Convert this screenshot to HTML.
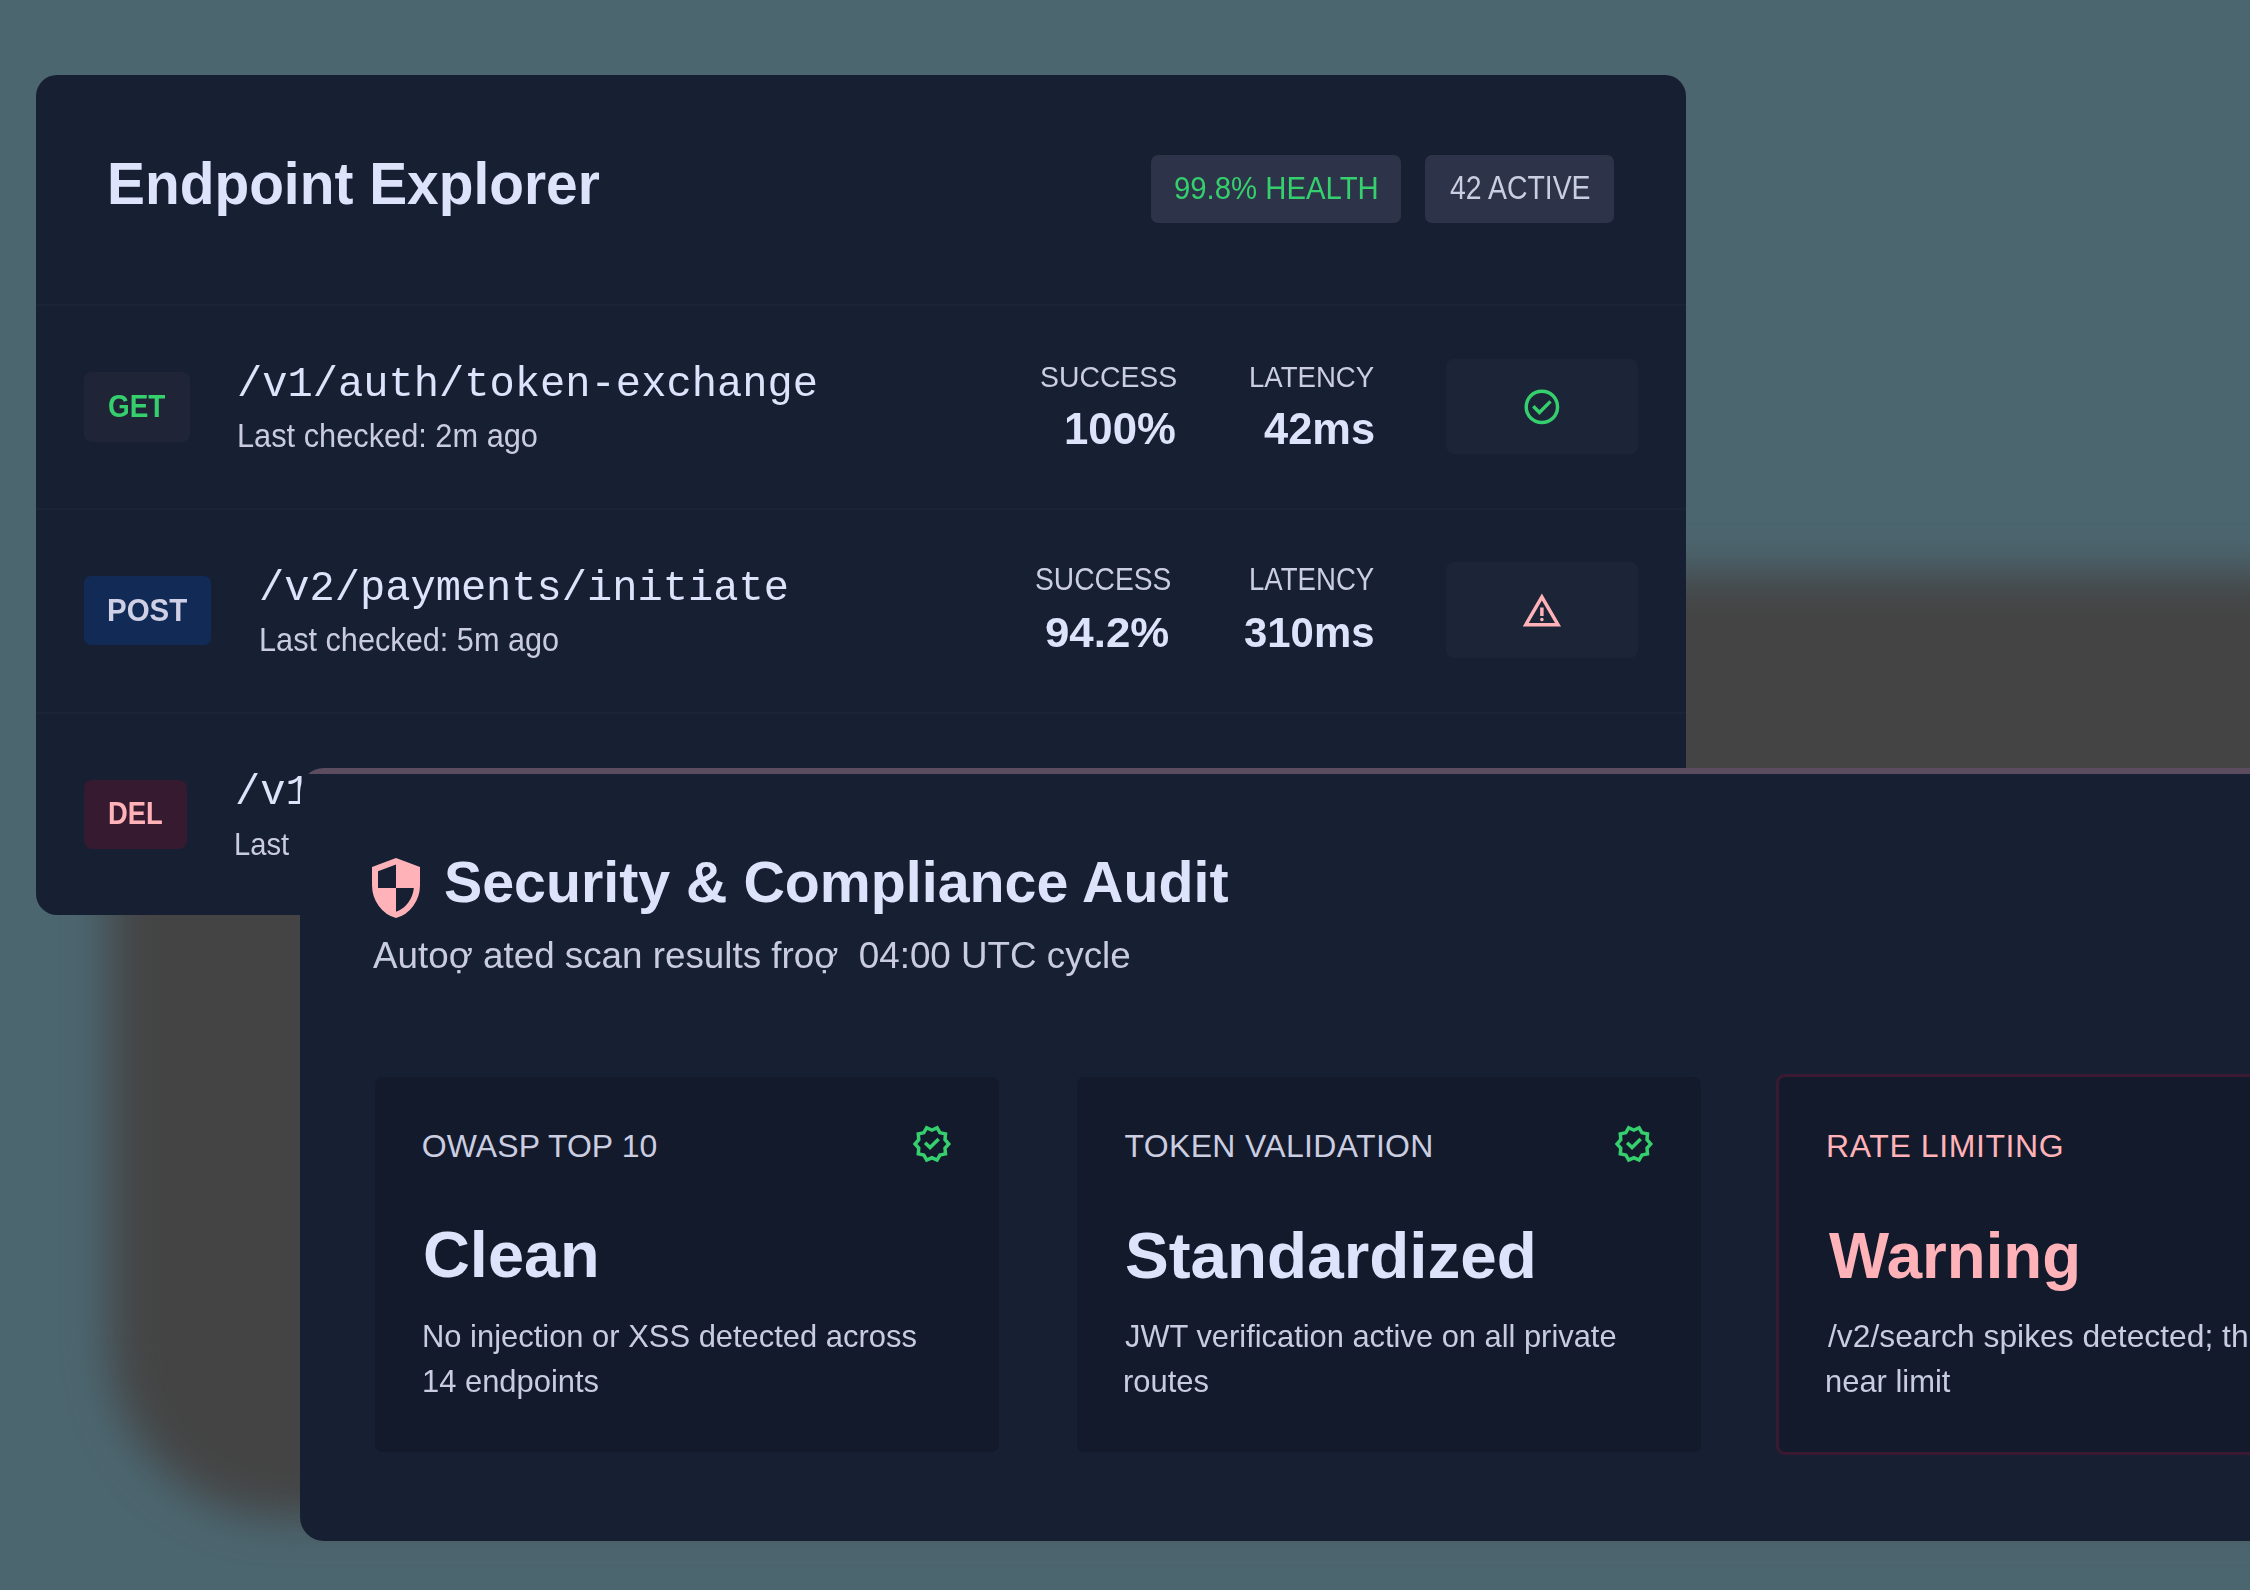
<!DOCTYPE html>
<html><head><meta charset="utf-8">
<style>
html,body{margin:0;padding:0;}
body{width:2250px;height:1590px;overflow:hidden;position:relative;background:#4c6670;}
.a{position:absolute;}
.t{position:absolute;white-space:pre;line-height:1;transform-origin:0 0;}
</style></head>
<body>

<div class="a" style="left:110px;top:573px;width:3000px;height:944px;border-radius:175px;background:#444444;filter:blur(22px);"></div>
<div class="a" style="left:36px;top:75px;width:1650px;height:840px;border-radius:21px;background:#171f33;"></div>
<div class="a" style="left:36px;top:304px;width:1650px;height:2px;background:#1b2337;"></div>
<div class="a" style="left:36px;top:508px;width:1650px;height:2px;background:#1b2337;"></div>
<div class="a" style="left:36px;top:712px;width:1650px;height:2px;background:#1b2337;"></div>
<div class="a" style="left:1151px;top:155px;width:250px;height:68px;border-radius:7px;background:#2d3348;"></div>
<div class="a" style="left:1425px;top:155px;width:189px;height:68px;border-radius:7px;background:#2d3348;"></div>
<div class="a" style="left:84px;top:372px;width:106px;height:70px;border-radius:8px;background:#1f2536;"></div>
<div class="a" style="left:84px;top:576px;width:127px;height:69px;border-radius:7px;background:#122b56;"></div>
<div class="a" style="left:84px;top:780px;width:103px;height:69px;border-radius:8px;background:#361a30;"></div>
<div class="a" style="left:1446px;top:359px;width:192px;height:95px;border-radius:8px;background:#1c2437;"></div>
<div class="a" style="left:1446px;top:562px;width:192px;height:96px;border-radius:8px;background:#1c2437;"></div>
<svg class="a" style="left:1520.90px;top:386.00px;" width="41.78" height="41.78" viewBox="0 -960 960 960"><path fill="#35cf6d" d="m424-296 282-282-56-56-226 226-114-114-56 56 170 170Zm56 216q-83 0-156-31.5T197-197q-54-54-85.5-127T80-480q0-83 31.5-156T197-763q54-54 127-85.5T480-880q83 0 156 31.5T763-763q54 54 85.5 127T880-480q0 83-31.5 156T763-197q-54 54-127 85.5T480-80Zm0-80q134 0 227-93t93-227q0-134-93-227t-227-93q-134 0-227 93t-93 227q0 134 93 227t227 93Zm0-320Z"/></svg>
<svg class="a" style="left:1521.20px;top:590.40px;" width="41.78" height="41.78" viewBox="0 -960 960 960"><path fill="#ffb3b8" d="m40-120 440-760 440 760H40Zm138-80h604L480-720 178-200Zm302-40q17 0 28.5-11.5T520-280q0-17-11.5-28.5T480-320q-17 0-28.5 11.5T440-280q0 17 11.5 28.5T480-240Zm-40-120h80v-200h-80v200Zm40-100Z"/></svg>
<div class="t" style="left:106.80px;top:154.70px;font:700 58.70px/1 'Liberation Sans',sans-serif;transform:scaleX(0.9689);color:#dde3fb;">Endpoint Explorer</div>
<div class="t" style="left:1174.48px;top:172.92px;font:400 31.16px/1 'Liberation Sans',sans-serif;transform:scaleX(0.9410);color:#35cf6d;">99.8% HEALTH</div>
<div class="t" style="left:1449.59px;top:172.31px;font:400 32.46px/1 'Liberation Sans',sans-serif;transform:scaleX(0.8755);color:#cbcde0;">42 ACTIVE</div>
<div class="t" style="left:107.78px;top:390.06px;font:700 32.17px/1 'Liberation Sans',sans-serif;transform:scaleX(0.8681);color:#35cf6d;">GET</div>
<div class="t" style="left:236.98px;top:363.56px;font:400 42.31px/1 'Liberation Mono',monospace;transform:scaleX(0.9951);color:#dde3fb;">/v1/auth/token-exchange</div>
<div class="t" style="left:236.84px;top:419.75px;font:400 32.90px/1 'Liberation Sans',sans-serif;transform:scaleX(0.9353);color:#c9cbe1;">Last checked: 2m ago</div>
<div class="t" style="left:1039.92px;top:360.94px;font:400 30.42px/1 'Liberation Sans',sans-serif;transform:scaleX(0.9331);color:#cbcde0;">SUCCESS</div>
<div class="t" style="left:1063.96px;top:406.95px;font:700 43.94px/1 'Liberation Sans',sans-serif;transform:scaleX(0.9950);color:#dde3fb;">100%</div>
<div class="t" style="left:1248.59px;top:360.94px;font:400 30.42px/1 'Liberation Sans',sans-serif;transform:scaleX(0.9072);color:#cbcde0;">LATENCY</div>
<div class="t" style="left:1263.75px;top:406.86px;font:700 44.57px/1 'Liberation Sans',sans-serif;transform:scaleX(0.9746);color:#dde3fb;">42ms</div>
<div class="t" style="left:107.38px;top:594.67px;font:700 31.55px/1 'Liberation Sans',sans-serif;transform:scaleX(0.9347);color:#cfd0e5;">POST</div>
<div class="t" style="left:259.39px;top:567.56px;font:400 42.31px/1 'Liberation Mono',monospace;transform:scaleX(0.9942);color:#dde3fb;">/v2/payments/initiate</div>
<div class="t" style="left:259.24px;top:623.75px;font:400 32.90px/1 'Liberation Sans',sans-serif;transform:scaleX(0.9328);color:#c9cbe1;">Last checked: 5m ago</div>
<div class="t" style="left:1034.83px;top:564.78px;font:400 30.85px/1 'Liberation Sans',sans-serif;transform:scaleX(0.9149);color:#cbcde0;">SUCCESS</div>
<div class="t" style="left:1045.27px;top:611.26px;font:700 43.24px/1 'Liberation Sans',sans-serif;transform:scaleX(1.0134);color:#dde3fb;">94.2%</div>
<div class="t" style="left:1248.59px;top:564.78px;font:400 30.85px/1 'Liberation Sans',sans-serif;transform:scaleX(0.8948);color:#cbcde0;">LATENCY</div>
<div class="t" style="left:1244.15px;top:611.26px;font:700 43.24px/1 'Liberation Sans',sans-serif;transform:scaleX(0.9691);color:#dde3fb;">310ms</div>
<div class="t" style="left:107.92px;top:798.23px;font:700 31.74px/1 'Liberation Sans',sans-serif;transform:scaleX(0.8633);color:#ffb3b8;">DEL</div>
<div class="t" style="left:234.78px;top:771.56px;font:400 42.31px/1 'Liberation Mono',monospace;transform:scaleX(0.9951);color:#dde3fb;">/v1/users/purge-cache</div>
<div class="t" style="left:234.27px;top:828.52px;font:400 31.16px/1 'Liberation Sans',sans-serif;transform:scaleX(0.9353);color:#c9cbe1;">Last</div>
<div class="a" style="left:300px;top:768px;width:2300px;height:773px;border-radius:24px;background:#171f33;overflow:hidden;"><div class="a" style="left:0;top:0;width:100%;height:6px;background:#5b4d5f;"></div></div>
<svg class="a" style="left:360.00px;top:852.00px;" width="72.00" height="72.00" viewBox="0 -960 960 960"><path fill="#ffb3b8" d="M480-80q-139-35-229.5-159.5T160-516v-244l320-120 320 120v244q0 152-90.5 276.5T480-80Zm0-84q97-30 162-118.5T718-480H480v-315l-240 90v207q0 7 2 18h238v316Z"/></svg>
<div class="a" style="left:375px;top:1077px;width:624px;height:375px;border-radius:7px;background:#131a2c;"></div>
<div class="a" style="left:1077px;top:1077px;width:624px;height:375px;border-radius:7px;background:#131a2c;"></div>
<div class="a" style="left:1776px;top:1074px;width:624px;height:375px;border-radius:9px;background:#131a2c;border:3px solid #3a1a33;"></div>
<svg class="a" style="left:911.00px;top:1122.50px;" width="41.78" height="41.78" viewBox="0 -960 960 960"><path fill="#35cf6d" d="m344-60-76-128-144-32 14-148-98-112 98-112-14-148 144-32 76-128 136 58 136-58 76 128 144 32-14 148 98 112-98 112 14 148-144 32-76 128-136-58-136 58Zm34-102 102-44 104 44 56-96 110-26-10-112 74-84-74-86 10-112-110-24-58-96-102 44-104-44-56 96-110 24 10 112-74 86 74 84-10 114 110 24 58 96Zm102-318Zm-42 142 226-226-56-58-170 170-86-84-56 56 142 142Z"/></svg>
<svg class="a" style="left:1613.00px;top:1122.50px;" width="41.78" height="41.78" viewBox="0 -960 960 960"><path fill="#35cf6d" d="m344-60-76-128-144-32 14-148-98-112 98-112-14-148 144-32 76-128 136 58 136-58 76 128 144 32-14 148 98 112-98 112 14 148-144 32-76 128-136-58-136 58Zm34-102 102-44 104 44 56-96 110-26-10-112 74-84-74-86 10-112-110-24-58-96-102 44-104-44-56 96-110 24 10 112-74 86 74 84-10 114 110 24 58 96Zm102-318Zm-42 142 226-226-56-58-170 170-86-84-56 56 142 142Z"/></svg>
<div class="t" style="left:443.88px;top:853.95px;font:700 57.61px/1 'Liberation Sans',sans-serif;transform:scaleX(0.9949);color:#dde3fb;">Security &amp; Compliance Audit</div>
<div class="t" style="left:372.82px;top:937.20px;font:400 37.68px/1 'Liberation Sans',sans-serif;transform:scaleX(0.9764);color:#c9cbe1;">Autoợ ated scan results froợ  04:00 UTC cycle</div>
<div class="t" style="left:421.86px;top:1131.31px;font:400 31.97px/1 'Liberation Sans',sans-serif;letter-spacing:0.08px;color:#cbcde0;">OWASP TOP 10</div>
<div class="t" style="left:422.70px;top:1223.20px;font:700 64.79px/1 'Liberation Sans',sans-serif;transform:scaleX(1.0015);color:#dde3fb;">Clean</div>
<div class="t" style="left:421.73px;top:1321.02px;font:400 31.16px/1 'Liberation Sans',sans-serif;transform:scaleX(0.9922);color:#c9cbe1;">No injection or XSS detected across</div>
<div class="t" style="left:421.88px;top:1365.52px;font:400 31.16px/1 'Liberation Sans',sans-serif;transform:scaleX(0.9922);color:#c9cbe1;">14 endpoints</div>
<div class="t" style="left:1124.56px;top:1131.31px;font:400 31.97px/1 'Liberation Sans',sans-serif;letter-spacing:0.34px;color:#cbcde0;">TOKEN VALIDATION</div>
<div class="t" style="left:1124.63px;top:1222.91px;font:700 65.35px/1 'Liberation Sans',sans-serif;transform:scaleX(1.0037);color:#dde3fb;">Standardized</div>
<div class="t" style="left:1124.74px;top:1321.02px;font:400 31.16px/1 'Liberation Sans',sans-serif;transform:scaleX(0.9903);color:#c9cbe1;">JWT verification active on all private</div>
<div class="t" style="left:1123.19px;top:1365.52px;font:400 31.16px/1 'Liberation Sans',sans-serif;transform:scaleX(0.9922);color:#c9cbe1;">routes</div>
<div class="t" style="left:1826.04px;top:1131.31px;font:400 31.97px/1 'Liberation Sans',sans-serif;letter-spacing:0.61px;color:#ffb3b8;">RATE LIMITING</div>
<div class="t" style="left:1829.20px;top:1223.18px;font:700 65.22px/1 'Liberation Sans',sans-serif;transform:scaleX(0.9751);color:#ffb3b8;">Warning</div>
<div class="t" style="left:1827.50px;top:1321.02px;font:400 31.16px/1 'Liberation Sans',sans-serif;transform:scaleX(1.0204);color:#c9cbe1;">/v2/search spikes detected; throttling</div>
<div class="t" style="left:1825.49px;top:1365.52px;font:400 31.16px/1 'Liberation Sans',sans-serif;transform:scaleX(0.9922);color:#c9cbe1;">near limit</div>
</body></html>
